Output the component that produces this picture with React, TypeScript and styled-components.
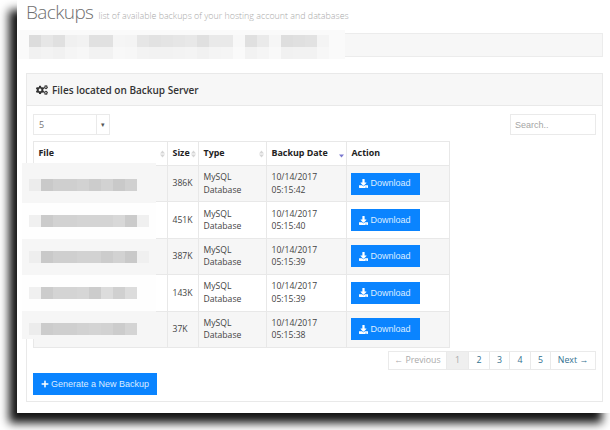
import * as React from 'react';
import styled, { createGlobalStyle } from 'styled-components';
import { FaCogs, FaDownload, FaPlus } from 'react-icons/fa';

const Global = createGlobalStyle`
  html, body {
    margin: 0;
    width: 610px;
    height: 430px;
    overflow: hidden;
    background: #fff;
    font-family: "Open Sans", "Liberation Sans", sans-serif;
  }
`;

const Screen = styled.div`
  box-sizing: border-box;
  margin-left: 17px;
  width: 593px;
  height: 413px;
  padding: 0 7px 0 9px;
  background: #fff;
  box-shadow: -8px 10px 9px rgba(0, 0, 0, 0.92);
`;

const TitleRow = styled.div`
  display: flex;
  align-items: baseline;
  height: 33px;
  white-space: nowrap;
`;

const Title = styled.h1`
  margin: 0 5px 0 0;
  font-size: 19px;
  line-height: 24px;
  letter-spacing: -0.6px;
  font-weight: 300;
  color: #6f6f6f;
`;

const Subtitle = styled.span`
  font-size: 8.9px;
  font-weight: 300;
  color: #a9a9a9;
`;

const Crumbs = styled.div`
  position: relative;
  box-sizing: border-box;
  height: 24px;
  background: #f7f7f7;
  border: 1px solid #ececec;
`;

const CrumbCover = styled.div`
  position: absolute;
  left: -9px;
  top: -4px;
  width: 327px;
  height: 29px;
  padding: 5px 0 0 11px;
  box-sizing: border-box;
  background: #fafafa;
`;

const Mosaic = styled.div`
  display: flex;
  height: 12px;
`;

const Tile = styled.i<{ $shade: string }>`
  display: block;
  flex: none;
  width: 12px;
  height: 12px;
  background: ${(p) => p.$shade};
`;

const Panel = styled.section`
  box-sizing: border-box;
  margin-top: 16px;
  height: 329px;
  background: #fff;
  border: 1px solid #e9e9e9;
`;

const PanelHeading = styled.h2`
  display: flex;
  align-items: center;
  gap: 4px;
  box-sizing: border-box;
  margin: 0;
  height: 32px;
  padding-left: 9px;
  font-size: 10px;
  font-weight: 600;
  color: #333;
  background: #f7f7f7;
  border-bottom: 1px solid #e9e9e9;
`;

const PanelBody = styled.div`
  padding: 8px 6px 0;
`;

const Controls = styled.div`
  display: flex;
  justify-content: space-between;
  height: 21px;
  margin-bottom: 6px;
`;

const LengthSelect = styled.div`
  display: flex;
  box-sizing: border-box;
  width: 77px;
  border: 1px solid #eaeaea;
  font-size: 9px;
  line-height: 19px;
  color: #777;
`;

const SelectValue = styled.span`
  flex: 1;
  padding-left: 5px;
`;

const SelectArrow = styled.span`
  width: 12px;
  border-left: 1px solid #eaeaea;
  text-align: center;
  font-size: 7px;
  color: #555;
`;

const Search = styled.input`
  box-sizing: border-box;
  width: 86px;
  padding: 0 4px;
  border: 1px solid #eaeaea;
  outline: 0;
  font-family: "Liberation Sans", sans-serif;
  font-size: 9px;
  &::placeholder {
    color: #a5a5a5;
    opacity: 1;
  }
`;

const TableWrap = styled.div`
  position: relative;
  width: 416px;
`;

const Table = styled.table`
  width: 416px;
  table-layout: fixed;
  border-collapse: collapse;
  font-size: 8.6px;
  line-height: 12.5px;
  color: #444;
`;

const Th = styled.th`
  position: relative;
  height: 23px;
  padding: 0 4.5px;
  border: 1px solid #e8e8e8;
  text-align: left;
  font-size: 8.9px;
  font-weight: 700;
  color: #222;
  white-space: nowrap;
`;

const Tr = styled.tr<{ $odd: boolean }>`
  height: 36.4px;
  background: ${(p) => (p.$odd ? '#f6f6f6' : '#fff')};
`;

const Td = styled.td`
  padding: 0 3px 0 4.5px;
  border: 1px solid #e8e8e8;
`;

const Sort = styled.svg`
  position: absolute;
  right: 2px;
  top: 50%;
  margin-top: -4px;
  width: 5px;
  height: 8px;
`;

const FileCensor = styled.div`
  position: absolute;
  left: -11px;
  top: 22px;
  width: 134px;
  display: flex;
  flex-direction: column;
`;

const CensorBand = styled.div<{ $h: number; $top: number; $odd: boolean }>`
  box-sizing: border-box;
  height: ${(p) => p.$h}px;
  padding: ${(p) => p.$top}px 0 0 7px;
  background: ${(p) => (p.$odd ? '#f6f6f6' : '#fefefe')};
`;

const Button = styled.a`
  display: inline-flex;
  align-items: center;
  justify-content: center;
  gap: 2px;
  box-sizing: border-box;
  height: 22px;
  vertical-align: middle;
  background: #0a84ff;
  font-family: "Liberation Sans", sans-serif;
  font-size: 9px;
  color: #dcecff;
  svg {
    color: #fff;
  }
`;

const DownloadButton = styled(Button)`
  width: 69px;
  margin-left: -1px;
`;

const GenerateButton = styled(Button)`
  display: flex;
  width: 124px;
  margin-top: 3px;
`;

const Pager = styled.nav`
  display: flex;
  justify-content: flex-end;
  margin-top: 3px;
`;

const PageList = styled.div`
  display: flex;
  height: 19px;
  border: 1px solid #eaeaea;
  box-sizing: border-box;
`;

const PageLink = styled.a<{ $w: number; $current?: boolean; $off?: boolean }>`
  box-sizing: border-box;
  width: ${(p) => p.$w}px;
  border-left: 1px solid #eaeaea;
  text-align: center;
  font-size: 8.8px;
  line-height: 17px;
  color: ${(p) => (p.$current || p.$off ? '#aaa' : '#33708f')};
  background: ${(p) => (p.$current ? '#efefef' : '#fff')};
  &:first-child {
    border-left: 0;
  }
`;

const SortArrows = ({ active }: { active?: boolean }) => (
  <Sort viewBox="0 0 5 8">
    {active ? (
      <path d="M0 4.5h5L2.5 7.5z" fill="#7a78cf" />
    ) : (
      <path d="M0 3.4h5L2.5 .4zM0 4.6h5L2.5 7.6z" fill="#d6d6d6" />
    )}
  </Sort>
);

const rows = [
  { size: '386K', time: '05:15:42' },
  { size: '451K', time: '05:15:40' },
  { size: '387K', time: '05:15:39' },
  { size: '143K', time: '05:15:39' },
  { size: '37K', time: '05:15:38' },
];

const crumbTiles = [
  '#dcdcdc', '#e6e6e6', '#e0e0e0', '#f0f0f0', '#f2f2f2', '#e1e1e1', '#e1e1e1', '#f5f5f5', '#f4f4f4',
  '#e6e6e6', '#e2e2e2', '#e4e4e4', '#e6e6e6', '#e8e8e8', '#e0e0e0', '#e9e9e9', '#e9e9e9', '#f8f8f8',
  '#e0e0e0', '#eaeaea', '#f6f6f6', '#dedede', '#e0e0e0', '#e2e2e2', '#f4f4f4',
];

const crumbTilesLow = [
  '#f1f1f1', '#f3f3f3', '#f1f1f1', '#f5f5f5', '#f7f7f7', '#f2f2f2', '#f2f2f2', '#f8f8f8', '#f7f7f7',
  '#f3f3f3', '#f2f2f2', '#f2f2f2', '#f3f3f3', '#f4f4f4', '#f1f1f1', '#f4f4f4', '#f5f5f5', '#fafafa',
  '#f2f2f2', '#f5f5f5', '#f9f9f9', '#f1f1f1', '#f2f2f2', '#f2f2f2', '#f7f7f7',
];

const censorBands = [
  { h: 40, top: 16, odd: true, tiles: ['#ececec', '#c9c9c9', '#cfcfcf', '#cfcfcf', '#d2d2d2', '#cccccc', '#d2d2d2', '#c9c9c9', '#d0d0d0'] },
  { h: 36, top: 12, odd: false, tiles: ['#f0f0f0', '#cbcbcb', '#d2d2d2', '#d2d2d2', '#d4d4d4', '#d4d4d4', '#d4d4d4', '#d8d8d8', '#cbcbcb', '#f0f0f0'] },
  { h: 36, top: 12, odd: true, tiles: ['#eeeeee', '#c9c9c9', '#cfcfcf', '#cfcfcf', '#d2d2d2', '#d2d2d2', '#cccccc', '#d2d2d2', '#c9c9c9', '#f0f0f0'] },
  { h: 36, top: 12, odd: false, tiles: ['#f0f0f0', '#cccccc', '#d4d4d4', '#d4d4d4', '#d6d6d6', '#cccccc', '#dcdcdc', '#d0d0d0', '#dcdcdc'] },
  { h: 28, top: 12, odd: true, tiles: ['#ececec', '#cccccc', '#cfcfcf', '#cfcfcf', '#d2d2d2', '#d4d4d4', '#d2d2d2', '#cccccc', '#d4d4d4'] },
];

const App = () => (
  <Screen>
    <Global />
    <TitleRow>
      <Title>Backups</Title>
      <Subtitle>list of available backups of your hosting account and databases</Subtitle>
    </TitleRow>
    <Crumbs>
      <CrumbCover>
        <Mosaic>{crumbTiles.map((c, i) => <Tile key={i} $shade={c} />)}</Mosaic>
        <Mosaic>{crumbTilesLow.map((c, i) => <Tile key={i} $shade={c} />)}</Mosaic>
      </CrumbCover>
    </Crumbs>
    <Panel>
      <PanelHeading>
        <FaCogs size={12} />
        Files located on Backup Server
      </PanelHeading>
      <PanelBody>
        <Controls>
          <LengthSelect>
            <SelectValue>5</SelectValue>
            <SelectArrow>▾</SelectArrow>
          </LengthSelect>
          <Search placeholder="Search.." />
        </Controls>
        <TableWrap>
          <Table>
            <colgroup>
              <col width="134" />
              <col width="31" />
              <col width="68" />
              <col width="80" />
              <col width="103" />
            </colgroup>
            <thead>
              <tr>
                <Th>File<SortArrows /></Th>
                <Th>Size<SortArrows /></Th>
                <Th>Type<SortArrows /></Th>
                <Th>Backup Date<SortArrows active /></Th>
                <Th>Action</Th>
              </tr>
            </thead>
            <tbody>
              {rows.map((row, i) => (
                <Tr key={i} $odd={i % 2 === 0}>
                  <Td />
                  <Td>{row.size}</Td>
                  <Td>MySQL<br />Database</Td>
                  <Td>10/14/2017<br />{row.time}</Td>
                  <Td>
                    <DownloadButton><FaDownload size={9} /> Download</DownloadButton>
                  </Td>
                </Tr>
              ))}
            </tbody>
          </Table>
          <FileCensor>
            {censorBands.map((band, i) => (
              <CensorBand key={i} $h={band.h} $top={band.top} $odd={band.odd}>
                <Mosaic>{band.tiles.map((c, j) => <Tile key={j} $shade={c} />)}</Mosaic>
              </CensorBand>
            ))}
          </FileCensor>
        </TableWrap>
        <Pager>
          <PageList>
            <PageLink $w={57} $off>← Previous</PageLink>
            <PageLink $w={22} $current>1</PageLink>
            <PageLink $w={21}>2</PageLink>
            <PageLink $w={20}>3</PageLink>
            <PageLink $w={21}>4</PageLink>
            <PageLink $w={20}>5</PageLink>
            <PageLink $w={45}>Next →</PageLink>
          </PageList>
        </Pager>
        <GenerateButton><FaPlus size={8} /> Generate a New Backup</GenerateButton>
      </PanelBody>
    </Panel>
  </Screen>
);

export default App;
